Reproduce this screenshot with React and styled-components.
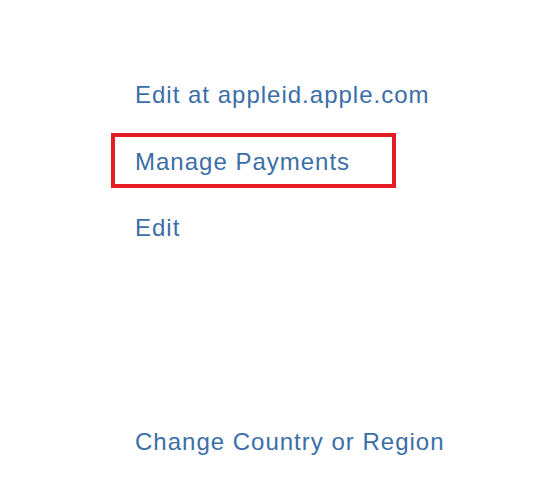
import React from "react";
import styled, { createGlobalStyle } from "styled-components";

const Global = createGlobalStyle`
  html, body { margin: 0; padding: 0; background: #ffffff; }
  body { font-family: "Liberation Sans", Arial, Helvetica, sans-serif; }
`;

const Page = styled.div`
  width: 558px;
  height: 477px;
  box-sizing: border-box;
  padding: 81px 0 0 135px;
  background: #ffffff;
  overflow: hidden;
`;

const List = styled.div`
  display: flex;
  flex-direction: column;
  align-items: flex-start;
`;

const Item = styled.div`
  position: relative;
  font-size: 24px;
  line-height: 28px;
  color: #3b6ea8;
  letter-spacing: 1px;
  margin-top: ${(p) => p.$gap || 0}px;
`;

const Highlight = styled.span`
  position: absolute;
  left: -24px;
  top: -15px;
  width: 285px;
  height: 55px;
  box-sizing: border-box;
  border: 4px solid #e41c24;
  pointer-events: none;
`;

export default function App() {
  return (
    <>
      <Global />
      <Page>
        <List>
          <Item>Edit at appleid.apple.com</Item>
          <Item $gap={38.5}>
            Manage Payments
            <Highlight />
          </Item>
          <Item $gap={38.5}>Edit</Item>
          <Item $gap={186}>Change Country or Region</Item>
        </List>
      </Page>
    </>
  );
}
